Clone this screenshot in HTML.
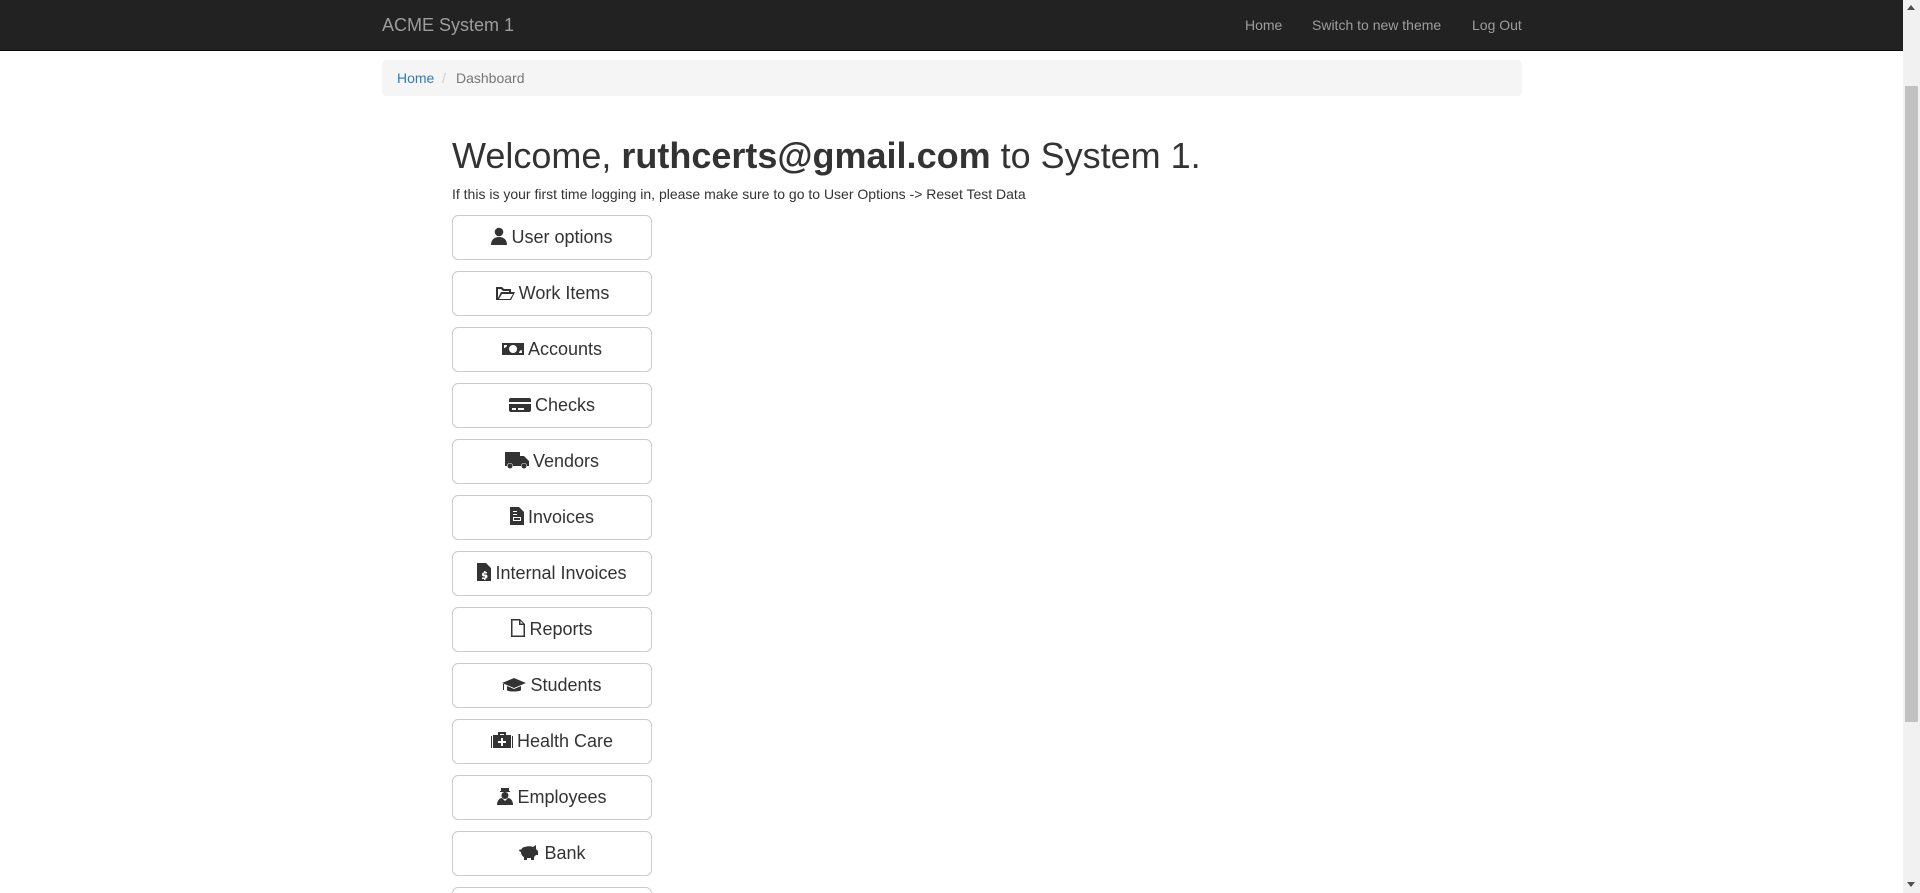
<!DOCTYPE html>
<html><head><meta charset="utf-8"><style>
html,body{margin:0;width:1920px;height:893px;overflow:hidden}
body{font-family:"Liberation Sans",Arial,sans-serif;color:#333;background:#fff;position:relative}
.nav{position:absolute;left:0;top:0;width:1903px;height:51px;background:#222;border-bottom:1px solid #080808;box-sizing:border-box}
.brand{position:absolute;left:382px;top:15px;font-size:18px;color:#9d9d9d;line-height:20px}
.nl{position:absolute;top:15px;font-size:14px;color:#9d9d9d;line-height:20px}
.bc{position:absolute;left:382px;top:60px;width:1140px;height:36px;background:#f5f5f5;border-radius:4px;font-size:14px;line-height:36px}
.bc a{position:absolute;left:15px;color:#337ab7}
.bc .s{position:absolute;left:60px;color:#ccc}
.bc .d{position:absolute;left:74px;color:#777}
h1{position:absolute;left:452px;top:134px;margin:0;font-size:36px;font-weight:normal;line-height:44px;white-space:nowrap}
.sub{position:absolute;left:452px;top:186px;font-size:14px;line-height:16px;white-space:nowrap}
.btn{position:absolute;left:452px;width:200px;height:45px;box-sizing:border-box;border:1px solid #ccc;border-radius:6px;font-size:18px;line-height:43px;text-align:center;background:#fff;white-space:nowrap}
.btn svg{vertical-align:-2px;margin-right:4px;fill:#333}
.sb{position:absolute;left:1903px;top:0;width:17px;height:893px;background:#f1f1f1}
.th{position:absolute;left:1905px;top:86px;width:13px;height:636px;background:#c1c1c1}
.wrap{position:absolute;left:0;top:0;width:1920px;height:893px;overflow:hidden}
</style></head><body><div class="wrap">
<div class="nav"></div>
<div class="brand">ACME System 1</div>
<div class="nl" style="left:1245px">Home</div>
<div class="nl" style="left:1312px">Switch to new theme</div>
<div class="nl" style="left:1472px">Log Out</div>
<div class="bc"><a>Home</a><span class="s">/</span><span class="d">Dashboard</span></div>
<h1>Welcome, <b>ruthcerts@gmail.com</b> to System 1.</h1>
<div class="sub">If this is your first time logging in, please make sure to go to User Options -&gt; Reset Test Data</div>

<div class="btn" style="top:215px"><svg width="16" height="18" viewBox="0 0 16 18"><circle cx="8" cy="5" r="4.3"/><path d="M0 18c0-5 3-8 8-8s8 3 8 8z"/></svg>User options</div>
<div class="btn" style="top:271px"><svg width="20" height="16" viewBox="0 0 20 16"><path d="M1 2h6l2 2h7v3h-2V6H8L6 4H3v9l3-6h14l-4 8H1z M7 9l-3 5h11l3-5z"/></svg>Work Items</div>
<div class="btn" style="top:327px"><svg width="22" height="16" viewBox="0 0 22 16"><path d="M0 2h22v12H0z M11 4a4 4 0 1 0 0.1 0z M2 4v3a3 3 0 0 0 3-3z M20 12v-3a3 3 0 0 0-3 3z" fill-rule="evenodd"/></svg>Accounts</div>
<div class="btn" style="top:383px"><svg width="22" height="16" viewBox="0 0 22 16"><path d="M2 1h18a2 2 0 0 1 2 2v2H0V3a2 2 0 0 1 2-2z M0 7h22v6a2 2 0 0 1-2 2H2a2 2 0 0 1-2-2z M3 11v2h4v-2z M9 11v2h6v-2z" fill-rule="evenodd"/></svg>Checks</div>
<div class="btn" style="top:439px"><svg width="24" height="18" viewBox="0 0 24 18"><path d="M0 1h15v4h4l5 5v5h-2a3 3 0 0 0-6 0H8a3 3 0 0 0-6 0H0z"/><circle cx="5" cy="15" r="2.5"/><circle cx="19" cy="15" r="2.5"/></svg>Vendors</div>
<div class="btn" style="top:495px"><svg width="14" height="18" viewBox="0 0 14 18"><path d="M0 0h9l5 5v13H0z M3 4v1h4V4z M3 7v1h4V7z M3 10v4h8v-4z M4 11h6v2H4z" fill-rule="evenodd"/></svg>Invoices</div>
<div class="btn" style="top:551px"><svg width="14" height="18" viewBox="0 0 14 18"><path d="M0 0h9l5 5v13H0z M7 8v1.5a2 2 0 0 0 0 4h1v1H5v1.5h2V17h1.5v-1.5a2 2 0 0 0 0-4H7v-1h3V9H8.5V8z" fill-rule="evenodd"/></svg>Internal Invoices</div>
<div class="btn" style="top:607px"><svg width="14" height="18" viewBox="0 0 14 18"><path d="M0 0h9l5 5v13H0z M1.5 1.5v15h11V6H8V1.5z M9.5 2v2.5H12z" fill-rule="evenodd"/></svg>Reports</div>
<div class="btn" style="top:663px"><svg width="24" height="16" viewBox="0 0 24 16"><path d="M12 1l12 5-12 5L0 6z M5 9v4c0 2 14 2 14 0V9l-7 3z M1 7v6h1V7z"/></svg>Students</div>
<div class="btn" style="top:719px"><svg width="22" height="18" viewBox="0 0 22 18"><path d="M7 1h8v3h5v13H2V4h5z M9 3v1h4V3z M10 7v3H7v2h3v3h2v-3h3v-2h-3V7z M0 5h1v12H0z M21 5h1v12h-1z" fill-rule="evenodd"/></svg>Health Care</div>
<div class="btn" style="top:775px"><svg width="16" height="18" viewBox="0 0 16 18"><path d="M4 1h8v3H4z M3 4h10v1H3z M8 5a3.5 3.5 0 1 1-0.1 0z M0 18c0-5 3-7 5-7l3 3 3-3c2 0 5 2 5 7z"/></svg>Employees</div>
<div class="btn" style="top:831px"><svg width="22" height="18" viewBox="0 0 22 18"><path d="M7 4c2-1 6-1 8 0l3-2v4l2 2v4h-2l-2 2v3h-3v-2H9v2H6v-3c-2-1-3-3-3-5l-2-1 1-2 1 1c1-2 2-3 4-3z"/></svg>Bank</div>
<div class="btn" style="top:887px"></div>

<div class="sb"></div><div class="th"></div>
<div style="position:absolute;left:1907px;top:5px;width:0;height:0;border-left:4px solid transparent;border-right:4px solid transparent;border-bottom:5px solid #505050"></div>
<div style="position:absolute;left:1907px;top:882px;width:0;height:0;border-left:4px solid transparent;border-right:4px solid transparent;border-top:5px solid #505050"></div>
</div></body></html>
